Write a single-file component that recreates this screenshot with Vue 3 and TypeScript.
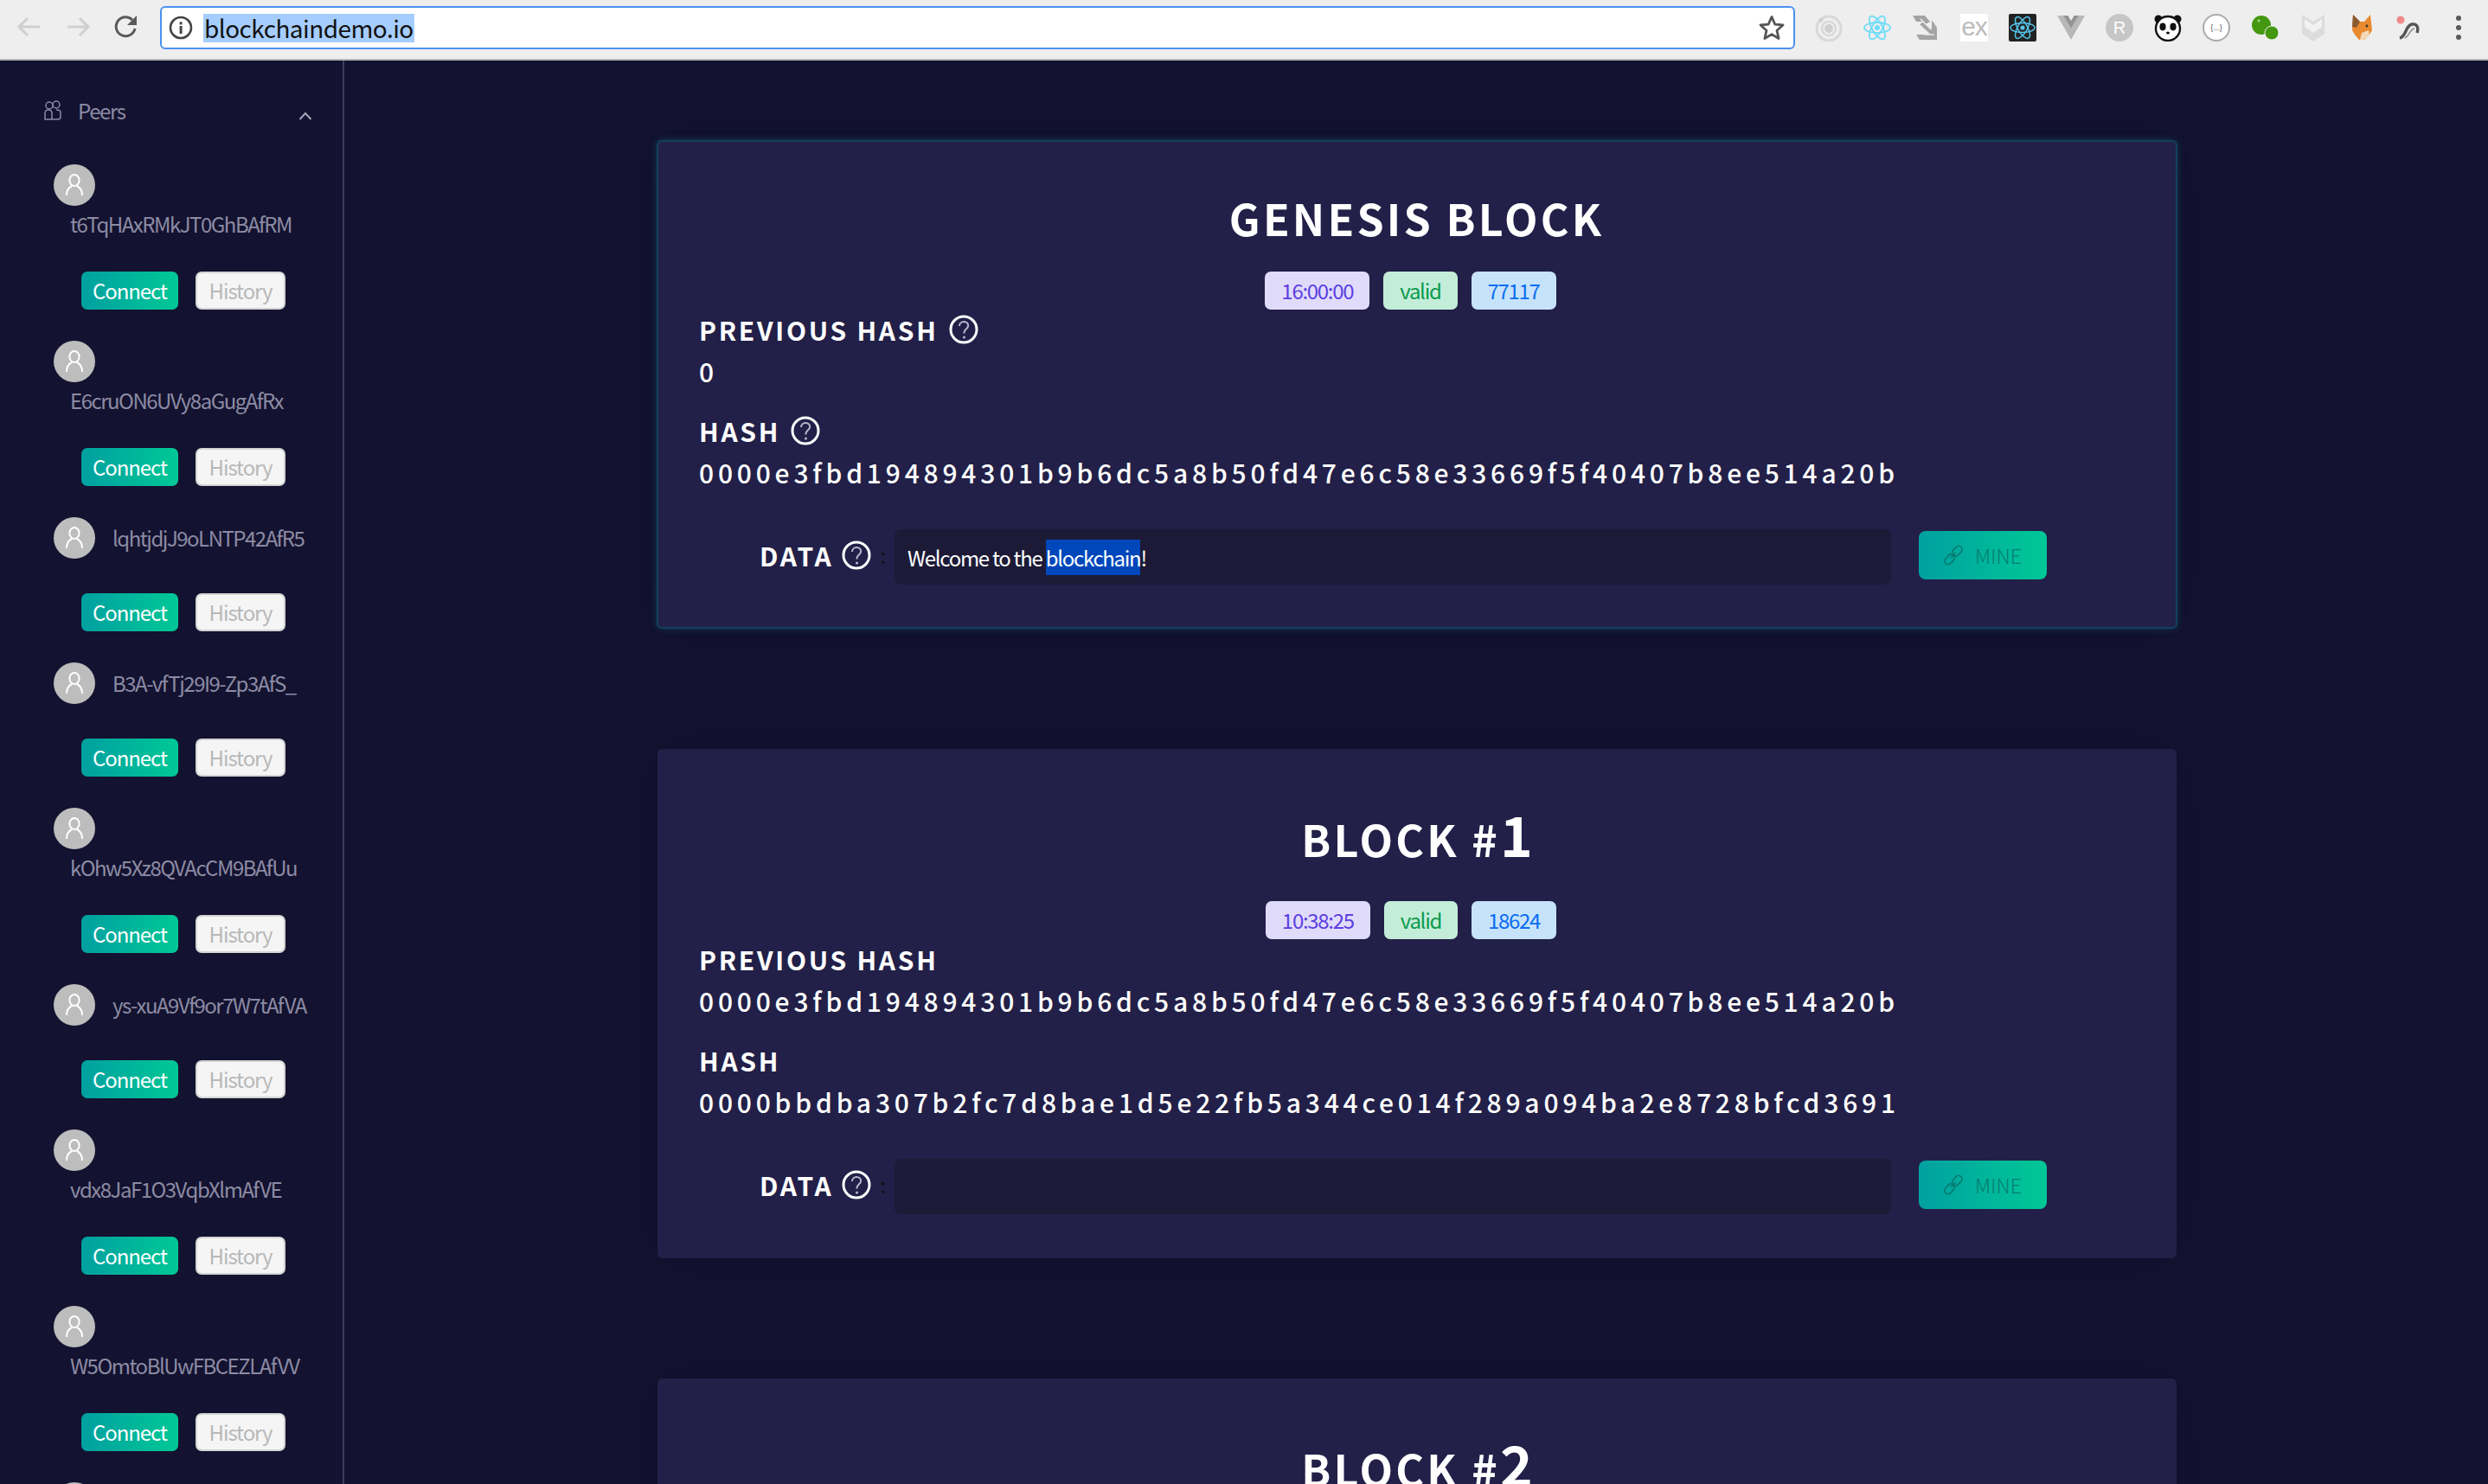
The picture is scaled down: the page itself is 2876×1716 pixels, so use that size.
<script setup lang="ts">
interface Peer { name: string; below: boolean }
interface Block { title: string; num?: string; time?: string; nonce?: string; prev?: string; hash?: string; help: boolean; data: boolean; active: boolean }

const peers: Peer[] = [
  { name: 't6TqHAxRMkJT0GhBAfRM', below: true },
  { name: 'E6cruON6UVy8aGugAfRx', below: true },
  { name: 'lqhtjdjJ9oLNTP42AfR5', below: false },
  { name: 'B3A-vfTj29I9-Zp3AfS_', below: false },
  { name: 'kOhw5Xz8QVAcCM9BAfUu', below: true },
  { name: 'ys-xuA9Vf9or7W7tAfVA', below: false },
  { name: 'vdx8JaF1O3VqbXlmAfVE', below: true },
  { name: 'W5OmtoBlUwFBCEZLAfVV', below: true },
]

const h0 = '0000e3fbd194894301b9b6dc5a8b50fd47e6c58e33669f5f40407b8ee514a20b'
const h1 = '0000bbdba307b2fc7d8bae1d5e22fb5a344ce014f289a094ba2e8728bfcd3691'

const blocks: Block[] = [
  { title: 'GENESIS BLOCK', time: '16:00:00', nonce: '77117', prev: '0', hash: h0, help: true, data: true, active: true },
  { title: 'BLOCK #', num: '1', time: '10:38:25', nonce: '18624', prev: h0, hash: h1, help: false, data: false, active: false },
  { title: 'BLOCK #', num: '2', help: false, data: false, active: false },
]
</script>

<template>
  <div class="page">
    <header class="chrome">
      <div class="nav">
        <svg width="32" height="32" viewBox="0 0 32 32" class="nav-off"><path d="M28 16H5M14 6 4 16l10 10" /></svg>
        <svg width="32" height="32" viewBox="0 0 32 32" class="nav-off"><path d="M4 16h23M18 6l10 10-10 10" /></svg>
        <svg width="32" height="32" viewBox="0 0 32 32" class="nav-on"><path d="M26 18a11 11 0 1 1-3-10" /><path class="fill" d="M28 3v11H17z" /></svg>
      </div>
      <div class="url">
        <svg width="28" height="28" viewBox="0 0 28 28"><circle cx="14" cy="14" r="12" fill="none" stroke="#444" stroke-width="2.6" /><rect x="12.6" y="12" width="3" height="9" fill="#444" /><rect x="12.6" y="7.4" width="3" height="3" fill="#444" /></svg>
        <span class="url-text">blockchaindemo.io</span>
        <svg class="star" width="32" height="32" viewBox="0 0 32 32"><path d="M16 3.5l3.8 8.6 9.2.9-7 6.2 2.1 9.3-8.1-4.9-8.1 4.9 2.1-9.3-7-6.2 9.2-.9z" fill="none" stroke="#555" stroke-width="2.8" stroke-linejoin="round" /></svg>
      </div>
      <div class="tools">
        <svg class="tool" viewBox="0 0 32 32"><circle cx="16" cy="17" r="14" fill="none" stroke="#d8d8d8" stroke-width="3" /><circle cx="16" cy="17" r="8" fill="none" stroke="#d4d4d4" stroke-width="2" /><circle cx="16" cy="17" r="5" fill="#cfcfcf" /><circle cx="7" cy="7" r="2.5" fill="#d0d0d0" /></svg>
        <svg class="tool" viewBox="0 0 32 32"><g fill="none" stroke="#6fdcf7" stroke-width="1.8"><ellipse cx="16" cy="16" rx="15" ry="6" /><ellipse cx="16" cy="16" rx="15" ry="6" transform="rotate(60 16 16)" /><ellipse cx="16" cy="16" rx="15" ry="6" transform="rotate(120 16 16)" /></g><circle cx="16" cy="16" r="3" fill="#6fdcf7" /></svg>
        <svg class="tool" viewBox="0 0 32 32"><path d="M1 2h14l6 7-5 3 7 6V7l6 9v14H9l-4-6h17L9 12l5-3H5z" fill="#a4a4a4" /><path d="M10 6l12 12M14 24h12" stroke="#e8e8e8" stroke-width="1.600" fill="none" /></svg>
        <div class="tool ex">ex</div>
        <svg class="tool" viewBox="0 0 32 32"><rect width="32" height="32" rx="2" fill="#222" /><g fill="none" stroke="#55c8ee" stroke-width="1.5"><ellipse cx="16" cy="16" rx="14" ry="5.5" /><ellipse cx="16" cy="16" rx="14" ry="5.5" transform="rotate(60 16 16)" /><ellipse cx="16" cy="16" rx="14" ry="5.5" transform="rotate(120 16 16)" /></g><circle cx="16" cy="16" r="2.6" fill="#55c8ee" /></svg>
        <svg class="tool" viewBox="0 0 32 32"><path d="M0 2 16 30 32 2H25L16 17 7 2z" fill="#b8b8b8" /><path d="M7 2l9 15 9-15h-5.500L16 8l-3.500-6z" fill="#949494" /></svg>
        <div class="tool r">R</div>
        <svg class="tool" viewBox="0 0 32 32"><circle cx="5" cy="6" r="4.5" fill="#111" /><circle cx="27" cy="6" r="4.5" fill="#111" /><ellipse cx="16" cy="17" rx="14" ry="14" fill="#fff" stroke="#111" stroke-width="2.4" /><ellipse cx="10" cy="15" rx="3.6" ry="4.4" fill="#111" /><ellipse cx="22" cy="15" rx="3.6" ry="4.4" fill="#111" /><ellipse cx="16" cy="22" rx="2" ry="1.5" fill="#111" /></svg>
        <div class="tool json">{...}</div>
        <svg class="tool" viewBox="0 0 32 32"><circle cx="12" cy="13" r="11" fill="#43980f" /><circle cx="24" cy="22" r="8" fill="#43980f" stroke="#eee" stroke-width="1" /><circle cx="9" cy="8" r="1.4" fill="#b7dd9a" /></svg>
        <svg class="tool" viewBox="0 0 32 32"><path d="M3 1l13 8 13-8v22L16 32 3 23z" fill="#dcdcdc" /><path d="M6 6l10 7 10-7v9l-10 7-10-7z" fill="#f2f2f2" /></svg>
        <svg class="tool" viewBox="0 0 32 32"><path d="M6 1l8 8h5l7-8 2 18-3 5-6 6h-6l-5-6-3-5z" fill="#e88a2e" /><path d="M6 1l8 8-4 7-5-1z" fill="#8a5a30" /><path d="M16 22l8-3 1 6-7 5h-4z" fill="#f3d9b8" /><circle cx="22" cy="14" r="1.4" fill="#333" /></svg>
        <svg class="tool" viewBox="0 0 32 32"><circle cx="5" cy="7" r="4.5" fill="#f08a8a" /><path d="M4 28c8-2 6-14 14-16 6-1 8 4 6 10" fill="none" stroke="#555" stroke-width="3.4" /><path d="M10 28c6-3 5-10 11-11" fill="none" stroke="#999" stroke-width="2" /></svg>
        <div class="dots"><i></i><i></i><i></i></div>
      </div>
    </header>

    <div class="body">
      <aside class="side">
        <div class="side-head">
          <svg width="22" height="24" viewBox="0 0 22 24" fill="none" stroke="#8c8ba3" stroke-width="1.5"><circle cx="7" cy="6" r="4" /><circle cx="15" cy="5" r="4" /><path d="M2 22v-7c0-3 2-4 4-4s4 1 4 4v7zM10 22h7c2 0 3-1 3-3v-5c0-2-2-3-5-3" /></svg>
          <span class="side-title">Peers</span>
          <svg class="chev" width="16" height="10" viewBox="0 0 16 10" fill="none" stroke="#a5a4b8" stroke-width="2"><path d="M1.5 9 8 2l6.5 7" /></svg>
        </div>
        <div v-for="p in peers" :key="p.name" class="peer">
          <div class="peer-top" :class="{ below: p.below }">
            <div class="avatar">
              <svg width="22" height="26" viewBox="0 0 22 26" fill="none" stroke="#fff" stroke-width="2"><ellipse cx="11" cy="7.5" rx="5.6" ry="6.5" /><path d="M2 25c0-7 4-10 6-11M20 25c0-7-4-10-6-11" /></svg>
            </div>
            <span class="peer-name">{{ p.name }}</span>
          </div>
          <div class="peer-btns">
            <button class="connect">Connect</button>
            <button class="history">History</button>
          </div>
        </div>
        <div class="peer"><div class="avatar"></div></div>
      </aside>

      <main class="main">
        <section v-for="b in blocks" :key="b.title + b.num" class="card" :class="{ active: b.active }">
          <h1 class="title">{{ b.title }}<span v-if="b.num" class="num">{{ b.num }}</span></h1>
          <template v-if="b.hash">
            <div class="badges">
              <span class="badge purple">{{ b.time }}</span>
              <span class="badge green">valid</span>
              <span class="badge blue">{{ b.nonce }}</span>
            </div>
            <div class="label">PREVIOUS HASH
              <svg v-if="b.help" class="help" viewBox="0 0 34 34"><circle cx="17" cy="17" r="15" fill="none" stroke="#fff" stroke-width="3" /><path d="M12 13c0-3 2.400-5 5.200-5s5 2 5 4.600c0 4-4.700 4-4.700 8v1" fill="none" stroke="#bbb9cf" stroke-width="2" /><circle cx="17.500" cy="26" r="1.500" fill="#bbb9cf" /></svg>
            </div>
            <div class="hash">{{ b.prev }}</div>
            <div class="label second">HASH
              <svg v-if="b.help" class="help" viewBox="0 0 34 34"><circle cx="17" cy="17" r="15" fill="none" stroke="#fff" stroke-width="3" /><path d="M12 13c0-3 2.400-5 5.200-5s5 2 5 4.600c0 4-4.700 4-4.700 8v1" fill="none" stroke="#bbb9cf" stroke-width="2" /><circle cx="17.500" cy="26" r="1.500" fill="#bbb9cf" /></svg>
            </div>
            <div class="hash">{{ b.hash }}</div>
            <div class="data-row">
              <div class="label data-label">DATA
                <svg class="help" viewBox="0 0 34 34"><circle cx="17" cy="17" r="15" fill="none" stroke="#fff" stroke-width="3" /><path d="M12 13c0-3 2.400-5 5.200-5s5 2 5 4.600c0 4-4.700 4-4.700 8v1" fill="none" stroke="#bbb9cf" stroke-width="2" /><circle cx="17.500" cy="26" r="1.500" fill="#bbb9cf" /></svg>
                <span class="colon">:</span>
              </div>
              <div class="input"><template v-if="b.data">Welcome to the <span class="sel">blockchain</span>!</template></div>
              <button class="mine">
                <svg width="22" height="24" viewBox="0 0 22 24" fill="none" stroke="#067d72" stroke-width="1.800"><g transform="rotate(42 11 12)"><rect x="7" y="-1" width="8" height="13" rx="4" /><rect x="7" y="12" width="8" height="13" rx="4" /><path d="M11 8v8" /></g></svg>
                <span>MINE</span>
              </button>
            </div>
          </template>
        </section>
      </main>
    </div>
  </div>
</template>

<style>
html, body { margin: 0; background: #131230; }
</style>

<style scoped>
.page { width: 2876px; height: 1716px; overflow: hidden; background: #131230; font-family: "Noto Sans CJK SC", "Noto Sans", sans-serif; display: flex; flex-direction: column; }
.chrome { height: 70px; flex: none; box-sizing: border-box; background: #eeeeee; border-bottom: 2px solid #b9b9b9; display: flex; align-items: flex-start; padding: 7px 0 0 18px; }
.nav { display: flex; gap: 24px; width: 167px; flex: none; padding-top: 8px; }
.nav svg { fill: none; stroke-width: 3; }
.nav-off { stroke: #cfcfcf; }
.nav-on { stroke: #5a5a5a; }
.nav-on .fill { fill: #5a5a5a; stroke: none; }
.url { width: 1890px; height: 50px; box-sizing: border-box; flex: none; background: #fff; border: 2px solid #4d90f0; border-radius: 6px; display: flex; align-items: center; padding: 0 9px 0 8px; }
.url-text { margin-left: 12px; font-size: 28px; line-height: 33px; letter-spacing: -0.55px; color: #111; background: #a6cdff; padding: 0 1px; }
.star { margin-left: auto; }
.tools { display: flex; align-items: center; gap: 24px; padding: 9px 0 0 23px; }
.tool { width: 32px; height: 32px; flex: none; }
.ex { background: #fff; color: #bbb; font: 30px/30px "Liberation Sans", sans-serif; text-align: center; letter-spacing: -1px; }
.r { background: #c6c6c6; border-radius: 50%; color: #fff; font: 20px/32px "Liberation Sans", sans-serif; text-align: center; }
.json { box-sizing: border-box; border: 2px solid #aaa; border-radius: 50%; background: #fff; color: #555; font: 9px/28px "Liberation Sans", sans-serif; text-align: center; }
.dots { width: 32px; display: flex; flex-direction: column; align-items: center; gap: 5px; }
.dots i { width: 6px; height: 6px; border-radius: 50%; background: #5a5a5a; }

.body { flex: 1; display: flex; min-height: 0; }
.side { width: 398px; flex: none; box-sizing: border-box; border-right: 2px solid #3d3b60; overflow: hidden; }
.side-head { height: 120px; box-sizing: border-box; display: flex; align-items: flex-start; padding: 46px 0 0 50px; color: #8c8ba3; }
.side-title { margin-left: 18px; font-size: 24px; line-height: 24px; letter-spacing: -1.4px; }
.chev { margin: 13px 0 0 200px; }
.peer { padding: 0 0 36px 62px; }
.peer-top { display: flex; align-items: center; gap: 20px; height: 48px; margin-bottom: 40px; }
.peer-top .peer-name { padding-bottom: 2px; }
.peer-top.below { flex-direction: column; align-items: flex-start; gap: 0; height: 92px; margin-bottom: 32px; }
.peer-top.below .peer-name { margin-left: 19px; line-height: 42px; padding-bottom: 0; }
.avatar { width: 48px; height: 48px; border-radius: 50%; background: #bdbdbd; display: flex; align-items: center; justify-content: center; flex: none; }
.peer-name { font-size: 24px; color: #8c8ba3; letter-spacing: -1.5px; white-space: nowrap; }
.peer-btns { display: flex; gap: 20px; padding-left: 32px; }
.peer-btns button { height: 44px; border-radius: 7px; font: 24px/1 "Noto Sans CJK SC", sans-serif; letter-spacing: -1.1px; padding: 0; box-sizing: border-box; }
.connect { width: 112px; border: 0; background: linear-gradient(90deg, #00a0a0, #00c896); color: #fff; }
.history { width: 104px; border: 2px solid #d4d4d4; background: #f5f5f5; color: #b8b8b8; }

.main { flex: 1; display: flex; flex-direction: column; align-items: center; padding: 92px 0 0 2px; gap: 139px; min-width: 0; }
.card { width: 1756px; box-sizing: border-box; flex: none; background: #222048; border-radius: 6px; padding: 0 48px 51px; box-shadow: 0 0 70px rgba(10, 10, 25, 0.2); }
.card.active { width: 1758px; border: 2px solid #12405e; box-shadow: 0 0 8px rgba(20, 110, 130, 0.45), 0 0 70px rgba(10, 10, 25, 0.2); padding: 0 48px 49px 47px; }
.title { margin: 0; padding-top: 56px; height: 150px; box-sizing: border-box; text-align: center; color: #fff; font-size: 50px; line-height: 62px; font-weight: 700; letter-spacing: 3.2px; }
.card:not(.active) .title { height: 176px; padding-top: 66px; }
.num { font-size: 64px; line-height: 62px; letter-spacing: 0; }
.badges { display: flex; justify-content: center; gap: 16px; height: 44px; padding-right: 14px; }
.badge { height: 44px; line-height: 44px; border-radius: 7px; padding: 0 19px; font-size: 24px; letter-spacing: -1.3px; box-sizing: border-box; }
.purple { background: #e0dbfb; color: #5b3fe0; }
.green { background: #c4edd9; color: #0a9a4e; }
.blue { background: #c6e3fb; color: #0b6cf0; }
.label { display: flex; align-items: center; gap: 12px; color: #fff; font-size: 30px; line-height: 40px; font-weight: 700; letter-spacing: 2.7px; height: 34px; margin-top: 6px; white-space: nowrap; }
.label.second { margin-top: 32px; }
.help { width: 34px; height: 34px; flex: none; }
.hash { color: #fff; font-size: 30px; line-height: 40px; letter-spacing: 4.8px; margin-top: 11px; height: 40px; font-weight: 500; white-space: nowrap; }
.data-row { display: flex; align-items: center; margin-top: 46px; height: 64px; padding-left: 70px; }
.data-label { margin: 0; width: 156px; flex: none; height: 60px; padding-bottom: 4px; gap: 10px; }
.colon { color: #111; font-size: 24px; font-weight: 400; letter-spacing: 0; }
.input { width: 1152px; height: 64px; flex: none; box-sizing: border-box; background: #1c1a36; border-radius: 8px; padding: 0 15px; color: #fff; font-size: 24px; line-height: 66px; letter-spacing: -1.3px; white-space: pre; }
.sel { background: #0047bb; padding: 3px 0; }
.mine { margin-left: 32px; align-self: flex-start; margin-top: 2px; width: 148px; height: 56px; flex: none; border: 0; border-radius: 8px; background: linear-gradient(90deg, #00a0a0, #00c896); color: #067d72; display: flex; align-items: center; justify-content: center; gap: 14px; font: 300 23px/1 "Noto Sans CJK SC", sans-serif; padding: 0; }
</style>
